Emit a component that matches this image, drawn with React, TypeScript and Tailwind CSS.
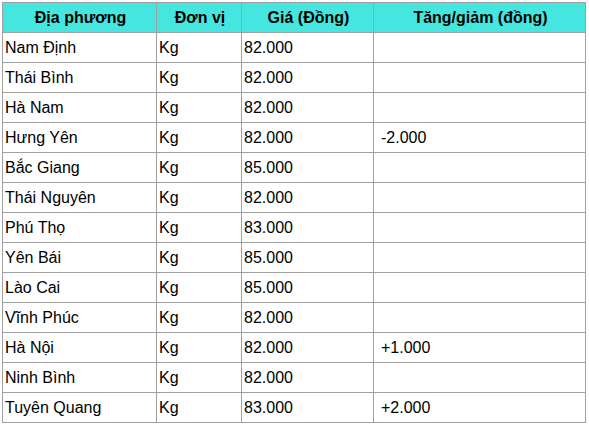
import React from 'react';

type Row = {
  place: string;
  unit: string;
  price: string;
  change: string;
};

const rows: Row[] = [
  { place: 'Nam Định', unit: 'Kg', price: '82.000', change: '' },
  { place: 'Thái Bình', unit: 'Kg', price: '82.000', change: '' },
  { place: 'Hà Nam', unit: 'Kg', price: '82.000', change: '' },
  { place: 'Hưng Yên', unit: 'Kg', price: '82.000', change: '-2.000' },
  { place: 'Bắc Giang', unit: 'Kg', price: '85.000', change: '' },
  { place: 'Thái Nguyên', unit: 'Kg', price: '82.000', change: '' },
  { place: 'Phú Thọ', unit: 'Kg', price: '83.000', change: '' },
  { place: 'Yên Bái', unit: 'Kg', price: '85.000', change: '' },
  { place: 'Lào Cai', unit: 'Kg', price: '85.000', change: '' },
  { place: 'Vĩnh Phúc', unit: 'Kg', price: '82.000', change: '' },
  { place: 'Hà Nội', unit: 'Kg', price: '82.000', change: '+1.000' },
  { place: 'Ninh Bình', unit: 'Kg', price: '82.000', change: '' },
  { place: 'Tuyên Quang', unit: 'Kg', price: '83.000', change: '+2.000' },
];

const cols = 'grid grid-cols-[154px_85px_132px_212px]';
const cell = 'h-[30px] flex items-center border-r border-b border-[#a0a0a0] pl-[2px]';

const App: React.FC = () => {
  return (
    <div className="min-h-screen bg-white p-[2px] font-['Liberation_Sans',Arial,sans-serif] text-[16px] text-black">
      <div className="w-[584px] border-l border-t border-[#a0a0a0]">
        {/* Header */}
        <div className={`${cols} bg-[#45e6df] font-bold`}>
          <div className={`${cell} justify-center`}>Địa phương</div>
          <div className={`${cell} justify-center`}>Đơn vị</div>
          <div className={`${cell} justify-center`}>Giá (Đồng)</div>
          <div className={`${cell} justify-center`}>Tăng/giảm (đồng)</div>
        </div>

        {/* Rows */}
        {rows.map((r) => (
          <div key={r.place} className={cols}>
            <div className={cell}>{r.place}</div>
            <div className={cell}>{r.unit}</div>
            <div className={cell}>{r.price}</div>
            <div className={`${cell} pl-[7px]`}>{r.change}</div>
          </div>
        ))}
      </div>
    </div>
  );
};

export default App;
